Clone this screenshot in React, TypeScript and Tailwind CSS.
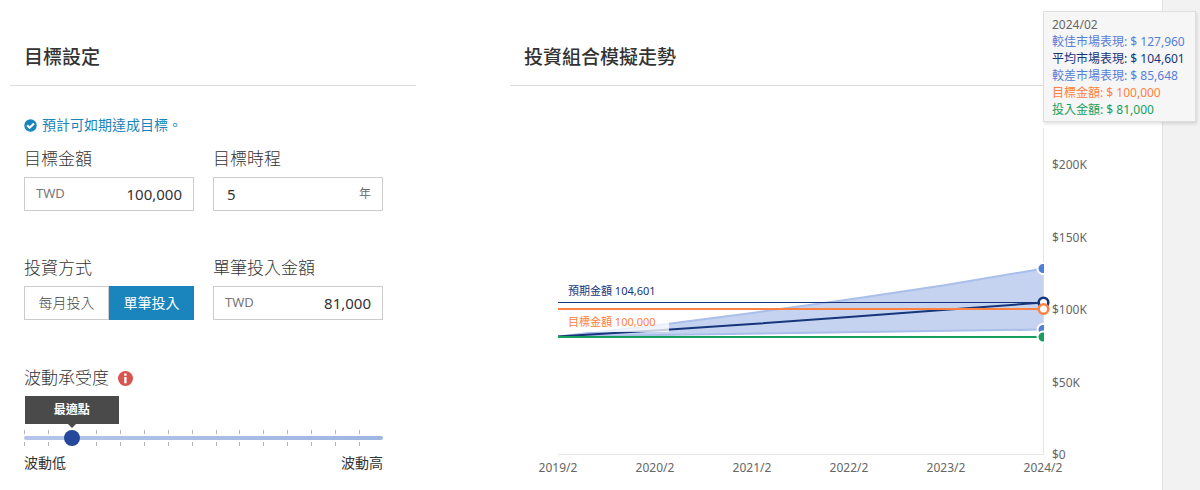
import { useState } from "react";
import type { ReactNode } from "react";

const FONT = "font-['Noto_Sans','Noto_Sans_CJK_TC',sans-serif]";

function SectionTitle({ children }: { children: ReactNode }) {
  return (
    <h2 className="border-b border-[#dcdcdc] px-[14px] pt-[43px] pb-[14px] text-[19px] leading-7 font-medium text-[#333]">
      {children}
    </h2>
  );
}

function CheckIcon() {
  return (
    <svg viewBox="0 0 13 13" className="size-[13px]" aria-hidden="true">
      <circle cx="6.5" cy="6.5" r="6.2" fill="#1985bc" />
      <path d="M3.1 6.3L5.6 8.8L10 4.4" fill="none" stroke="#fff" strokeWidth="2.1" />
    </svg>
  );
}

function InfoIcon() {
  return (
    <svg viewBox="0 0 15 15" className="size-[15px]" aria-hidden="true">
      <circle cx="7.5" cy="7.5" r="7.5" fill="#d9534f" />
      <path d="M6.2 2.6h2.4v2.2H6.2zM6.2 5.9h2.4v6.4H6.2z" fill="#fff" />
    </svg>
  );
}

const labelClass = "mb-[6px] block text-[17px] leading-6 font-light text-[#333]";

type FieldProps = {
  id: string;
  label: string;
  value: string;
  prefix?: string;
  suffix?: string;
};

function Field({ id, label, value, prefix, suffix }: FieldProps) {
  const [text, setText] = useState(value);
  return (
    <div>
      <label htmlFor={id} className={labelClass}>
        {label}
      </label>
      <div className="flex h-[34px] items-center border border-[#ccc] bg-white px-[11px]">
        {prefix && <span className="text-[13px] text-[#777]">{prefix}</span>}
        <input
          id={id}
          value={text}
          onChange={(e) => setText(e.target.value)}
          className={`w-full min-w-0 flex-1 bg-transparent text-[15px] text-[#333] outline-none ${prefix ? "text-right" : "text-left px-[2px]"}`}
        />
        {suffix && <span className="text-xs text-[#6b6b6b]">{suffix}</span>}
      </div>
    </div>
  );
}

function ModeToggle() {
  const [mode, setMode] = useState("single");
  const options = [
    { key: "monthly", text: "每月投入" },
    { key: "single", text: "單筆投入" },
  ];
  return (
    <div role="group" aria-labelledby="mode-label">
      <span id="mode-label" className={labelClass}>
        投資方式
      </span>
      <div className="grid h-[34px] grid-cols-2">
        {options.map((o) => (
          <button
            key={o.key}
            type="button"
            aria-pressed={mode === o.key}
            onClick={() => setMode(o.key)}
            className={`border text-sm ${mode === o.key ? "border-[#1985bc] bg-[#1985bc] text-white" : "border-[#ccc] bg-white font-light text-[#444]"}`}
          >
            {o.text}
          </button>
        ))}
      </div>
    </div>
  );
}

const TICKS = Array.from({ length: 15 }, (_, i) => i);

function RiskSlider() {
  const [risk, setRisk] = useState(2);
  return (
    <div className="mt-[46px]">
      <div className="flex items-center gap-[9px]">
        <label htmlFor="risk" className="text-[17px] leading-6 font-light text-[#333]">
          波動承受度
        </label>
        <InfoIcon />
      </div>
      <div className="relative mt-10 h-4">
        <div className="absolute bottom-[22px] left-2/15 flex h-7 w-[94px] -translate-x-1/2 items-center justify-center bg-[#4a4a4a] text-xs font-bold text-white">
          最適點
          <span className="absolute top-full border-x-4 border-t-4 border-x-transparent border-t-[#4a4a4a]" />
        </div>
        <div className="flex h-4 flex-col justify-between">
          {["top", "bottom"].map((row) => (
            <div key={row} className="flex">
              {TICKS.map((t) => (
                <span key={t} className="h-1 flex-1 border-l border-[#b5b5b5]" />
              ))}
            </div>
          ))}
        </div>
        <div className="absolute inset-x-0 top-[6px] h-1 rounded-full bg-linear-to-r from-[#b4c5e8] to-[#9fb6e2]" />
        <div className="absolute -inset-x-2 top-0 flex">
          <input
            id="risk"
            type="range"
            min={0}
            max={15}
            value={risk}
            onChange={(e) => setRisk(Number(e.target.value))}
            className="h-4 w-full cursor-pointer appearance-none bg-transparent [&::-webkit-slider-thumb]:size-4 [&::-webkit-slider-thumb]:appearance-none [&::-webkit-slider-thumb]:rounded-full [&::-webkit-slider-thumb]:bg-[#26489a]"
          />
        </div>
      </div>
      <div className="mt-[7px] flex justify-between text-sm leading-5 text-[#333]">
        <span>波動低</span>
        <span>波動高</span>
      </div>
    </div>
  );
}

const X_LABELS = ["2019/2", "2020/2", "2021/2", "2022/2", "2023/2", "2024/2"];
const Y_LABELS = [
  { text: "$200K", y: 83 },
  { text: "$150K", y: 156 },
  { text: "$100K", y: 228 },
  { text: "$50K", y: 301 },
  { text: "$0", y: 373 },
];

function Chart() {
  return (
    <svg viewBox="0 0 642 400" className="block h-auto w-full" role="img" aria-label="投資組合模擬走勢">
      <defs>
        <clipPath id="plot">
          <rect x="48" y="42" width="486" height="327" />
        </clipPath>
      </defs>
      <path d="M48 368.5H533.5V42" fill="none" stroke="#e6e6e6" />
      <g clipPath="url(#plot)" fill="none">
        <path d="M48 250.5L145 239.5L242 227L339 213.5L436 199L533.5 182.5V243.5L48 250.5Z" fill="#c5d3f0" />
        <path d="M48 250.5L145 239.5L242 227L339 213.5L436 199L533.5 182.5" stroke="#a9bfe9" strokeWidth="2" />
        <path d="M48 250.5L533.5 243.5" stroke="#a9bfe9" strokeWidth="2" />
        <path d="M48 250.5L145 244.5L242 238L339 231L436 223.8L533.5 216.5" stroke="#16357a" strokeWidth="2" />
        <path d="M48 216.5H533" stroke="#16357a" />
        <path d="M48 223H533" stroke="#ff8040" strokeWidth="2" />
        <path d="M48 251H533" stroke="#17a05d" strokeWidth="2" />
        <circle cx="533" cy="182.5" r="5.5" fill="#4f7fd9" stroke="#fff" strokeWidth="2" />
        <circle cx="533" cy="243.5" r="5.5" fill="#4f7fd9" stroke="#fff" strokeWidth="2" />
        <circle cx="533" cy="251" r="5.5" fill="#17a05d" stroke="#fff" strokeWidth="2" />
      </g>
      <circle cx="533.5" cy="216.5" r="4.8" fill="#fff" stroke="#16357a" strokeWidth="2.6" />
      <circle cx="533.5" cy="223" r="4.8" fill="#fff" stroke="#ff8040" strokeWidth="2.6" />
      <rect x="50" y="225" width="109" height="21" fill="#fff" fillOpacity="0.75" />
      <text x="58" y="209" fontSize="11" fill="#16357a">
        預期金額 104,601
      </text>
      <text x="58" y="240" fontSize="11" fill="#ff8040">
        目標金額 100,000
      </text>
      <g fontSize="12" fill="#666">
        {X_LABELS.map((t, i) => (
          <text key={t} x={48 + i * 97} y="386" textAnchor="middle">
            {t}
          </text>
        ))}
        {Y_LABELS.map((l) => (
          <text key={l.text} x="542" y={l.y}>
            {l.text}
          </text>
        ))}
      </g>
    </svg>
  );
}

function ChartTooltip() {
  return (
    <div className="absolute top-[11px] right-1 w-[153px] border border-[#dedede] bg-[#f6f6f6] px-2 pt-1 pb-[3px] text-xs leading-[17px] whitespace-nowrap shadow-[1px_2px_3px_rgba(0,0,0,0.12)]">
      <p className="text-[#666]">2024/02</p>
      <p className="text-[#5580d8]">較佳市場表現: $ 127,960</p>
      <p className="text-[#16357a]">平均市場表現: $ 104,601</p>
      <p className="text-[#5580d8]">較差市場表現: $ 85,648</p>
      <p className="text-[#ff8040]">目標金額: $ 100,000</p>
      <p className="text-[#17a05d]">投入金額: $ 81,000</p>
    </div>
  );
}

export default function App() {
  return (
    <div lang="zh-Hant" className={`relative flex min-h-screen bg-[#f2f2f2] ${FONT}`}>
      <main className="mr-[37px] grid flex-1 grid-cols-[406fr_642fr] gap-x-[94px] border-r border-[#e2e2e2] bg-white px-[10px]">
        <section>
          <SectionTitle>目標設定</SectionTitle>
          <div className="pr-[33px] pl-[14px]">
            <p className="mt-[29px] flex items-center gap-[5px] text-sm leading-5 text-[#1985bc]">
              <CheckIcon />
              預計可如期達成目標。
            </p>
            <div className="mt-3 grid grid-cols-2 gap-x-[19px] gap-y-[45px]">
              <Field id="goal" label="目標金額" value="100,000" prefix="TWD" />
              <Field id="years" label="目標時程" value="5" suffix="年" />
              <ModeToggle />
              <Field id="amount" label="單筆投入金額" value="81,000" prefix="TWD" />
            </div>
            <RiskSlider />
          </div>
        </section>
        <section>
          <SectionTitle>投資組合模擬走勢</SectionTitle>
          <Chart />
        </section>
      </main>
      <ChartTooltip />
    </div>
  );
}
